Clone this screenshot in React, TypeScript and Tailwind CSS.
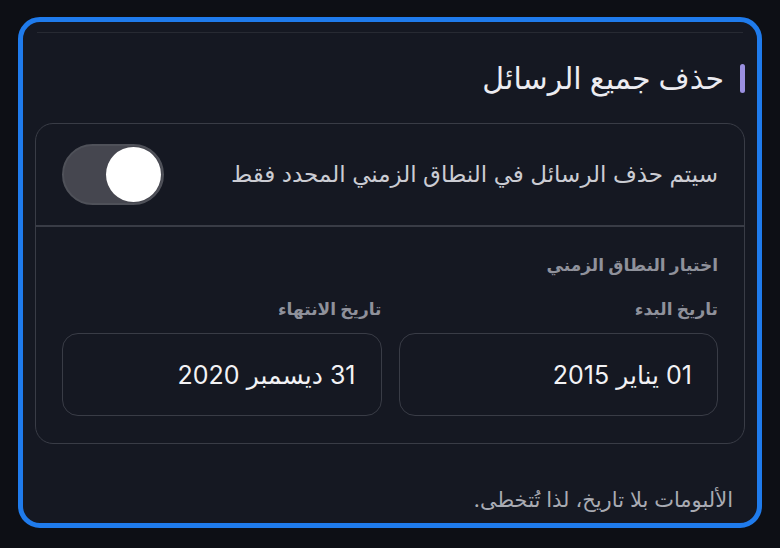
export default function App() {
  return (
    <div
      className="min-h-[548px] bg-[#0d0f15] px-[18px] pt-[17px]"
      style={{ fontFamily: 'Inter, "DejaVu Sans", sans-serif' }}
    >
      <div
        dir="rtl"
        className="flex h-[511px] flex-col rounded-[22px] border-[5px] border-[#1f7bec] bg-[#151822] px-3"
      >
        <div className="mx-[2px] mt-[10px] h-px bg-[#272a33]" />

        <div className="mt-[30px] flex items-center gap-4">
          <span className="h-[29px] w-[5px] rounded-full bg-[#9a8fe0]" />
          <h2 className="text-[30px] font-medium leading-none text-[#ececf1]">حذف جميع الرسائل</h2>
        </div>

        <div className="mt-[30px] rounded-[18px] border-[1.5px] border-[#393c46]">
          <div className="flex h-[101px] items-center justify-between px-[26px]">
            <span className="text-[23px] text-[#cbccd3]">سيتم حذف الرسائل في النطاق الزمني المحدد فقط</span>
            <span className="flex h-[61px] w-[102px] items-center justify-start rounded-full border-2 border-[#4f5159] bg-[#45464f] px-[1px]">
              <span className="h-[55px] w-[55px] rounded-full bg-white" />
            </span>
          </div>

          <div className="h-[1.5px] bg-[#393c46]" />

          <div className="px-[26px] pb-[27px] pt-[30px]">
            <div className="text-[17px] font-semibold leading-none text-[#8f919b]">اختيار النطاق الزمني</div>
            <div className="mt-[27px] grid grid-cols-2 gap-[17px]">
              <DateField label="تاريخ البدء" value="01 يناير 2015" />
              <DateField label="تاريخ الانتهاء" value="31 ديسمبر 2020" />
            </div>
          </div>
        </div>

        <p className="mr-3 mt-[45px] text-[21px] leading-none text-[#a9abb3]">الألبومات بلا تاريخ، لذا تُتخطى.</p>
      </div>
    </div>
  );
}

function DateField({ label, value }: { label: string; value: string }) {
  return (
    <div>
      <div className="text-[17px] font-semibold leading-none text-[#8f919b]">{label}</div>
      <div className="mt-[15px] flex h-[83px] items-center rounded-[16px] border-[1.5px] border-[#393c46] px-[25px] pt-[4px]">
        <span className="text-[25px] text-[#f2f2f5]">{value}</span>
      </div>
    </div>
  );
}
